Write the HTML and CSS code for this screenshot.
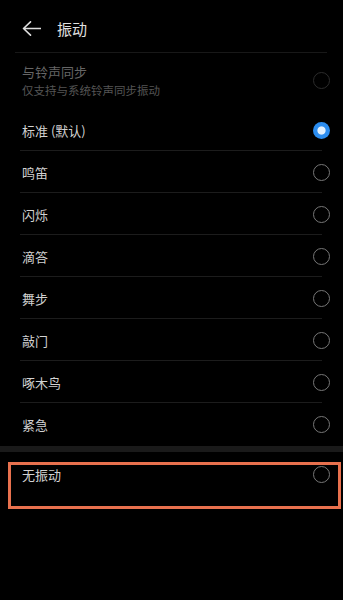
FILE: index.html
```html
<!DOCTYPE html>
<html lang="zh-CN">
<head>
    <meta charset="UTF-8">
    <title>振动</title>
    <link rel="stylesheet" href="styles.css">
</head>
<body>
<div class="screen">
    <header class="toolbar">
        <svg class="back" width="19" height="15" viewBox="0 0 19 15">
            <path d="M18.5 7.5H1.5M8.5 0.8L1.5 7.5l7 6.7" fill="none" stroke="#dedede" stroke-width="1.6" stroke-linecap="round" stroke-linejoin="round"/>
        </svg>
        <h1>振动</h1>
    </header>

    <div class="sync-item">
        <div class="sync-text">
            <div class="sync-title">与铃声同步</div>
            <div class="sync-sub">仅支持与系统铃声同步振动</div>
        </div>
        <span class="radio radio-disabled"></span>
    </div>

    <ul class="option-list">
        <li class="option">标准 (默认)<span class="radio radio-on"></span></li>
        <li class="option">鸣笛<span class="radio"></span></li>
        <li class="option">闪烁<span class="radio"></span></li>
        <li class="option">滴答<span class="radio"></span></li>
        <li class="option">舞步<span class="radio"></span></li>
        <li class="option">敲门<span class="radio"></span></li>
        <li class="option">啄木鸟<span class="radio"></span></li>
        <li class="option option-last">紧急<span class="radio"></span></li>
    </ul>

    <div class="band"></div>

    <div class="option option-none">
        无振动<span class="radio"></span>
        <div class="highlight"></div>
    </div>
</div>
</body>
</html>
```

FILE: styles.css
```css
body { margin: 0; background: #000; font-family: "Noto Sans CJK SC", "Noto Sans", sans-serif; }
.screen { width: 343px; height: 600px; background: #000; overflow: hidden; }

.toolbar { display: flex; align-items: center; height: 47px; padding: 5px 0 0 7px; margin: 0 16px 0 15px; border-bottom: 1px solid #181818; }
.toolbar .back { display: block; margin-right: 16px; }
.toolbar h1 { margin: 0; font-size: 15px; font-weight: normal; color: #e0e0e0; line-height: 20px; }

.sync-item { display: flex; align-items: center; justify-content: space-between; padding: 10px 13px 11px 22px; }
.sync-title { font-size: 13px; line-height: 18px; color: #666; }
.sync-sub { margin-top: 1px; font-size: 11.5px; line-height: 16px; color: #555; }

.option-list { list-style: none; margin: 0; padding: 0; }
.option { display: flex; align-items: center; justify-content: space-between; height: 42px; padding: 0 13px 0 22px; font-size: 13px; color: #d2d2d2; box-sizing: border-box;
    background: linear-gradient(#1c1c1c, #1c1c1c) no-repeat 20px 100% / 302px 1px; }
.option-last { background: none; }

.band { height: 6px; margin-top: 1px; background: #1a1a1a; }

.option-none { position: relative; align-items: flex-start; height: 57px; padding-top: 14px; line-height: 18px; background: none; }
.highlight { position: absolute; left: 8px; top: 10px; width: 333px; height: 47px; box-sizing: border-box; border: 3px solid #e8714e; }

.radio { width: 17px; height: 17px; border-radius: 50%; border: 1.3px solid #777; box-sizing: border-box; flex-shrink: 0; }
.radio-disabled { border-color: #2c2c2c; }
.radio-on { border: none; background: radial-gradient(circle, #e2f1ff 0 3.6px, #2b8df0 4.6px); }
```
